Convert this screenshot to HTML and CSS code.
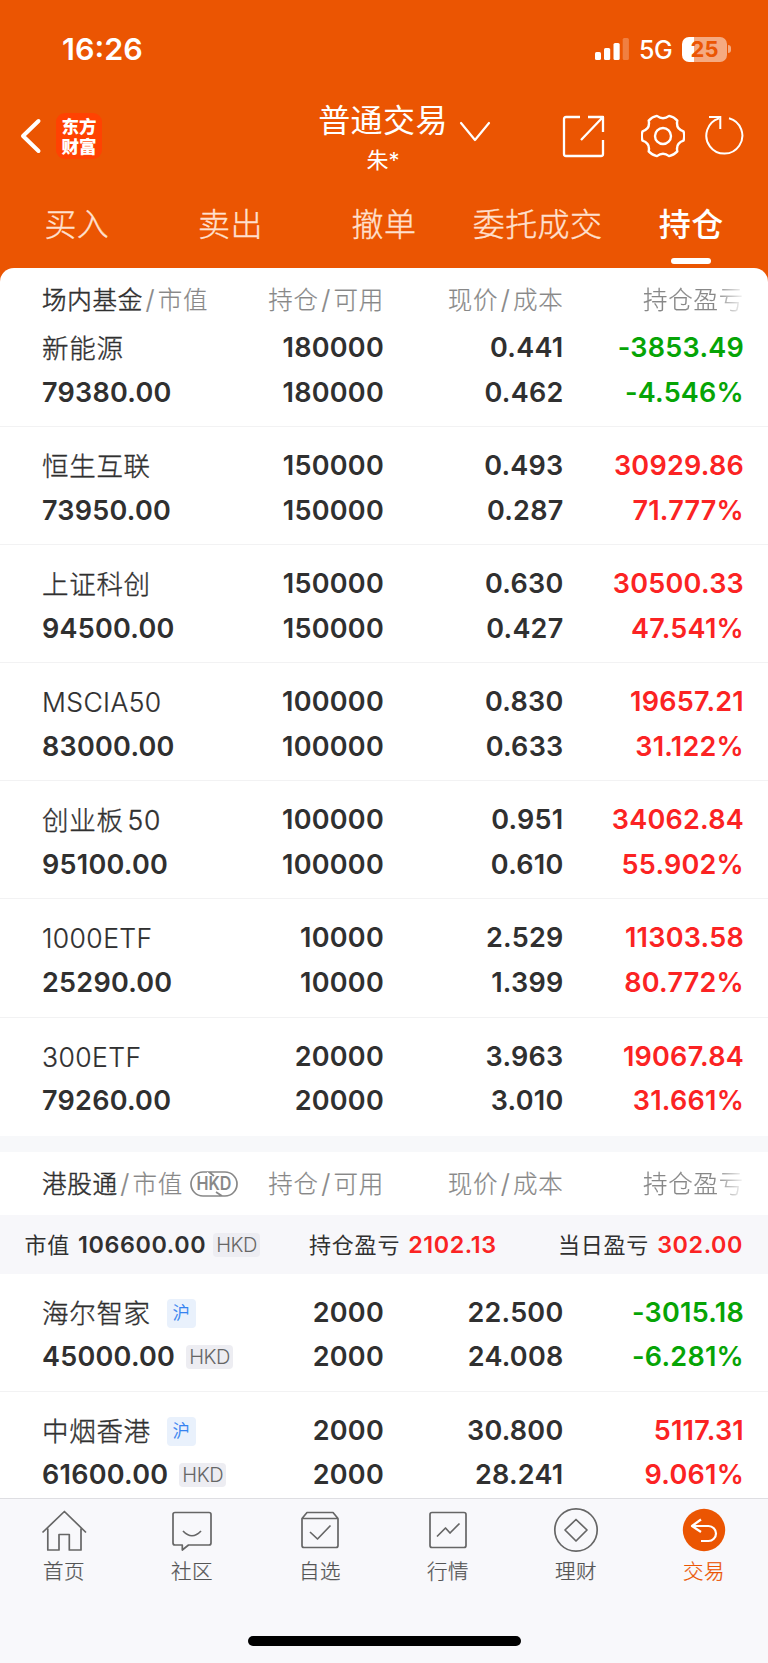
FILE: index.html
```html
<!DOCTYPE html>
<html lang="zh-CN">
<head>
<meta charset="utf-8">
<title>普通交易</title>
<link rel="stylesheet" href="styles.css">
</head>
<body>
<div class="app">
  <header class="top">
    <div class="status">
      <span class="clock">16:26</span>
      <svg class="signal" width="34" height="24" viewBox="0 0 34 24" fill="#fff"><rect x="0" y="15" width="6" height="8" rx="1.6"/><rect x="9" y="11" width="6.200" height="12" rx="1.600"/><rect x="18.500" y="6" width="6.200" height="17" rx="1.600"/><rect x="27.700" y="1" width="6.200" height="22" rx="1.600" opacity=".25"/></svg>
      <span class="network">5G</span>
      <div class="battery"><span>25</span></div>
      <i class="battery-tip"></i>
    </div>
    <div class="nav">
      <svg class="back" width="22" height="36" viewBox="0 0 22 36" fill="none" stroke="#fff" stroke-width="4" stroke-linecap="round" stroke-linejoin="round"><path d="M18.500 3 3 18 18.500 33"/></svg>
      <div class="logo">东方<br>财富</div>
      <div class="title"><b>普通交易</b><small>朱*</small></div>
      <svg class="chevron" width="32" height="22" viewBox="0 0 32 22" fill="none" stroke="#fff" stroke-width="2.200" stroke-linecap="round" stroke-linejoin="round"><path d="M2 2 16 19 30 2"/></svg>
      <svg class="share" width="44" height="44" viewBox="0 0 44 44" fill="none" stroke="#fff" stroke-width="2.300" stroke-linejoin="round"><path d="M18 2H4Q2 2 2 4V39Q2 41 4 41H39Q41 41 41 39V25M26 2H41V17M19 25 41 2"/></svg>
      <svg class="gear" width="44" height="44" viewBox="0 0 44 44" fill="none" stroke="#fff" stroke-width="2.400" stroke-linejoin="round"><path d="M42.500 17.300Q44 22 42.500 26.700Q34.600 29.200 36.300 37.400Q33 41.100 28.100 42.100Q22 37.500 15.900 42.100Q11 41.100 7.700 37.400Q9.400 29.200 1.500 26.700Q0 22 1.500 17.300Q9.400 14.800 7.700 6.600Q11 2.900 15.900 1.900Q22 6.500 28.100 1.900Q33 2.900 36.300 6.600Q34.600 14.800 42.500 17.300Z"/><circle cx="22" cy="22" r="8"/></svg>
      <svg class="refresh" width="40" height="42" viewBox="0 0 40 42" fill="none" stroke="#fff" stroke-width="2"><path d="M24 4.200A18 18 0 1 1 14 4.400M4 3H15.300V15"/></svg>
    </div>
    <div class="tabs"><span>买入</span><span>卖出</span><span>撤单</span><span>委托成交</span><span class="active">持仓</span></div>
  </header>

  <main class="sheet">
    <div class="thead"><div><b>场内基金</b><i>/</i>市值</div><div>持仓<i>/</i>可用</div><div>现价<i>/</i>成本</div><div class="fade">持仓盈亏</div></div>
    <div class="row"><div><em>新能源</em><span>79380.00</span></div><div><span>180000</span><span>180000</span></div><div><span>0.441</span><span>0.462</span></div><div class="down"><span>-3853.49</span><span>-4.546%</span></div></div>
    <div class="row"><div><em>恒生互联</em><span>73950.00</span></div><div><span>150000</span><span>150000</span></div><div><span>0.493</span><span>0.287</span></div><div class="up"><span>30929.86</span><span>71.777%</span></div></div>
    <div class="row"><div><em>上证科创</em><span>94500.00</span></div><div><span>150000</span><span>150000</span></div><div><span>0.630</span><span>0.427</span></div><div class="up"><span>30500.33</span><span>47.541%</span></div></div>
    <div class="row"><div><em class="latin">MSCIA50</em><span>83000.00</span></div><div><span>100000</span><span>100000</span></div><div><span>0.830</span><span>0.633</span></div><div class="up"><span>19657.21</span><span>31.122%</span></div></div>
    <div class="row"><div><em>创业板<u>50</u></em><span>95100.00</span></div><div><span>100000</span><span>100000</span></div><div><span>0.951</span><span>0.610</span></div><div class="up"><span>34062.84</span><span>55.902%</span></div></div>
    <div class="row"><div><em class="latin">1000ETF</em><span>25290.00</span></div><div><span>10000</span><span>10000</span></div><div><span>2.529</span><span>1.399</span></div><div class="up"><span>11303.58</span><span>80.772%</span></div></div>
    <div class="row last"><div><em class="latin">300ETF</em><span>79260.00</span></div><div><span>20000</span><span>20000</span></div><div><span>3.963</span><span>3.010</span></div><div class="up"><span>19067.84</span><span>31.661%</span></div></div>
    <div class="divider"></div>
    <div class="thead hk"><div><b>港股通</b><i>/</i>市值<svg class="pill" width="48" height="26" viewBox="0 0 48 26"><path d="M17 1H13A12 12 0 0 0 13 25H32L26 21M31 25H35A12 12 0 0 0 35 1H19L24 5" fill="none" stroke="#888" stroke-width="1.700"/><text x="24" y="18.600" text-anchor="middle" textLength="35" lengthAdjust="spacingAndGlyphs">HKD</text></svg></div><div>持仓<i>/</i>可用</div><div>现价<i>/</i>成本</div><div class="fade">持仓盈亏</div></div>
    <div class="summary"><div>市值<b>106600.00</b><span class="hkd">HKD</span></div><div>持仓盈亏<b class="up">2102.13</b></div><div>当日盈亏<b class="up">302.00</b></div></div>
    <div class="row"><div><em>海尔智家<span class="market">沪</span></em><span>45000.00<span class="hkd">HKD</span></span></div><div><span>2000</span><span>2000</span></div><div><span>22.500</span><span>24.008</span></div><div class="down"><span>-3015.18</span><span>-6.281%</span></div></div>
    <div class="row last"><div><em>中烟香港<span class="market">沪</span></em><span>61600.00<span class="hkd">HKD</span></span></div><div><span>2000</span><span>2000</span></div><div><span>30.800</span><span>28.241</span></div><div class="up"><span>5117.31</span><span>9.061%</span></div></div>
  </main>

  <footer class="dock">
    <nav>
      <a><svg viewBox="0 0 44 44"><path d="M.500 24.500 22.400 3.500 44 24.500M5.800 20.500V42H17V26.500H27.300V42H39V20.500"/></svg>首页</a>
      <a><svg viewBox="0 0 44 44"><path d="M5 4.500H39Q41 4.500 41 6.500V35Q41 37 39 37H18.500L12.300 42V37H5Q3 37 3 35V6.500Q3 4.500 5 4.500ZM13 23Q22 32.500 31 23"/></svg>社区</a>
      <a><svg viewBox="0 0 44 44"><path d="M4 10.500H40V37.500Q40 39.500 38 39.500H6Q4 39.500 4 37.500V10.500L9 4.500H35L40 10.500M12 24 19.500 31 32.500 17.500"/></svg>自选</a>
      <a><svg viewBox="0 0 44 44"><path d="M6 4.500H38Q40 4.500 40 6.500V37.500Q40 39.500 38 39.500H6Q4 39.500 4 37.500V6.500Q4 4.500 6 4.500ZM11 28.500 19.500 20 24 25 33.500 15.500"/></svg>行情</a>
      <a><svg viewBox="0 0 44 44"><circle cx="22" cy="22" r="21.200"/><path d="M22 11.500 33 22 22 33 11 22Z"/></svg>理财</a>
      <a class="on"><svg viewBox="0 0 44 44"><circle cx="22" cy="22" r="21.200" fill="#eb5502" stroke="none"/><path d="M19 11.500 10 18 19 24M10 18H26.500A7.500 7.500 0 0 1 26.500 33H19" stroke="#fff" stroke-width="2.200"/></svg>交易</a>
    </nav>
    <div class="home-bar"></div>
  </footer>
</div>
</body>
</html>
```
FILE: styles.css
```css
* { box-sizing: border-box; }
body { margin: 0; background: #fff; color: #303030; font-family: Inter, "Noto Sans CJK SC", sans-serif; }
i, em, u { font-style: normal; text-decoration: none; }
svg { display: block; flex: none; }
.app { width: 768px; height: 1663px; overflow: hidden; display: flex; flex-direction: column; background: #eb5502; }

.top { height: 268px; flex: none; color: #fff; }
.status { height: 98px; display: flex; align-items: center; padding-left: 62px; }
.clock { width: 533px; font-size: 30.500px; font-weight: 600; line-height: 36px; }
.network { margin-left: 10px; width: 43px; font-size: 25px; font-weight: 500; line-height: 30px; padding-top: 1px; letter-spacing: -.5px; }
.battery { width: 45px; height: 25px; border-radius: 7px; background: linear-gradient(90deg, #fff 26%, #f5aa81 26%); color: #eb5502; font-size: 22px; font-weight: 700; line-height: 25px; text-align: center; }
.battery-tip { width: 3px; height: 8px; margin-left: 1px; border-radius: 0 4px 4px 0; background: #f5aa81; }

.nav { height: 92px; display: flex; align-items: flex-start; }
.back { margin: 20px 0 0 20px; }
.logo { margin: 15px 0 0 14px; width: 46px; height: 46px; padding: 4px 0; border-radius: 9px; background: #ff4202; font-size: 17.500px; font-weight: 900; line-height: 19.500px; text-align: center; }
.title { margin-left: 216px; width: 130px; display: flex; flex-direction: column; align-items: center; }
.title b { font-size: 32px; font-weight: 400; line-height: 44px; margin-top: 1px; white-space: nowrap; letter-spacing: .4px; }
.title small { font-size: 22px; line-height: 30px; margin-top: 2px; }
.chevron { margin: 23px 0 0 11px; }
.share { margin: 17px 0 0 71px; }
.gear { margin: 16px 0 0 35px; }
.refresh { margin: 16px 0 0 20px; }

.tabs { height: 78px; display: grid; grid-template-columns: repeat(5, 1fr); text-align: center; font-size: 32px; line-height: 70px; letter-spacing: .4px; font-weight: 300; color: #ffe0cf; white-space: nowrap; -webkit-text-stroke: .35px currentColor; }
.tabs span { display: flex; flex-direction: column; align-items: center; }
.tabs .active { color: #fff; font-weight: 500; -webkit-text-stroke: 0; }
.tabs .active::after { content: ""; width: 40px; height: 6px; border-radius: 3px; background: #fff; margin-top: -2px; }

.sheet { height: 1230px; flex: none; background: #fff; border-radius: 14px 14px 0 0; }
.thead, .row { display: grid; grid-template-columns: 202px 140px 179.500px 180.500px; padding-left: 42px; white-space: nowrap; }
.thead > div + div, .row > div + div { text-align: right; }
.thead { height: 41px; padding-top: 12px; font-size: 24.500px; line-height: 40px; letter-spacing: .75px; font-weight: 300; color: #888; -webkit-text-stroke: .2px currentColor; }
.thead b { font-weight: 300; color: #303030; -webkit-text-stroke: .5px currentColor; }
.thead i { padding: 0 2.500px; font-size: 26px; line-height: 30px; }
.thead.hk { height: 63px; padding-top: 12px; }
.thead > div:first-child { display: flex; align-items: center; height: 40px; }
.fade { -webkit-mask-image: linear-gradient(90deg, #000 84%, transparent 101%); mask-image: linear-gradient(90deg, #000 84%, transparent 101%); }
.pill { margin-left: 7px; }
.pill text { font-size: 18px; font-weight: 600; fill: #888; letter-spacing: 0; stroke: none; -webkit-text-stroke: 0; }

.row { height: 118.100px; padding-top: 17px; border-bottom: 1.500px solid #f2f2f3; font-size: 27px; font-weight: 600; letter-spacing: .25px; line-height: 44.500px; }
.row.last { border-bottom: 0; }
.row > div > span, .row em { display: block; height: 44.500px; }
.row em { font-size: 26.500px; font-weight: 300; letter-spacing: .7px; -webkit-text-stroke: .35px currentColor; }
.row em.latin { letter-spacing: .4px; -webkit-text-stroke: .2px currentColor; }
.row em u { margin-left: 4px; }
.up { color: #fb2323; }
.down { color: #06a406; }
.divider { height: 16px; background: #f7f8fa; }

.summary { height: 59px; background: #f7f7fa; display: grid; grid-template-columns: 284.500px 200px 234px; padding: 1px 0 0 24.500px; font-size: 22px; line-height: 58px; letter-spacing: .8px; white-space: nowrap; }
.summary > div { display: flex; align-items: center; }
.summary > div:last-child { justify-content: flex-end; }
.summary b { font-size: 23.300px; font-weight: 600; letter-spacing: .6px; margin-left: 8px; }
.hkd { display: inline-block; width: 47px; height: 24px; margin-left: 7px; border-radius: 4px; background: #ededf2; color: #666; font-size: 20px; font-weight: 300; line-height: 24px; letter-spacing: -.4px; text-align: center; }
.row .hkd { margin-left: 11px; vertical-align: 2px; }
.market { display: inline-block; width: 29px; height: 29px; margin-left: 16px; border-radius: 4px; background: #e9f1fc; color: #2f80f0; font-size: 17px; font-weight: 300; line-height: 29px; letter-spacing: 0; text-align: center; vertical-align: 4px; }

.dock { height: 165px; flex: none; background: #f8f8fb; border-top: 1px solid #dedee2; }
.dock nav { display: grid; grid-template-columns: repeat(6, 1fr); height: 137px; padding-top: 9px; }
.dock a { display: flex; flex-direction: column; align-items: center; font-size: 20.500px; line-height: 30px; letter-spacing: .5px; font-weight: 300; color: #555; -webkit-text-stroke: .25px currentColor; }
.dock svg { width: 44px; height: 44px; margin-bottom: 5px; fill: none; stroke: #666; stroke-width: 1.700; stroke-linejoin: round; overflow: visible; }
.dock .on { color: #eb5502; }
.home-bar { width: 273px; height: 10px; border-radius: 5px; background: #000; margin-left: 248px; }
```
